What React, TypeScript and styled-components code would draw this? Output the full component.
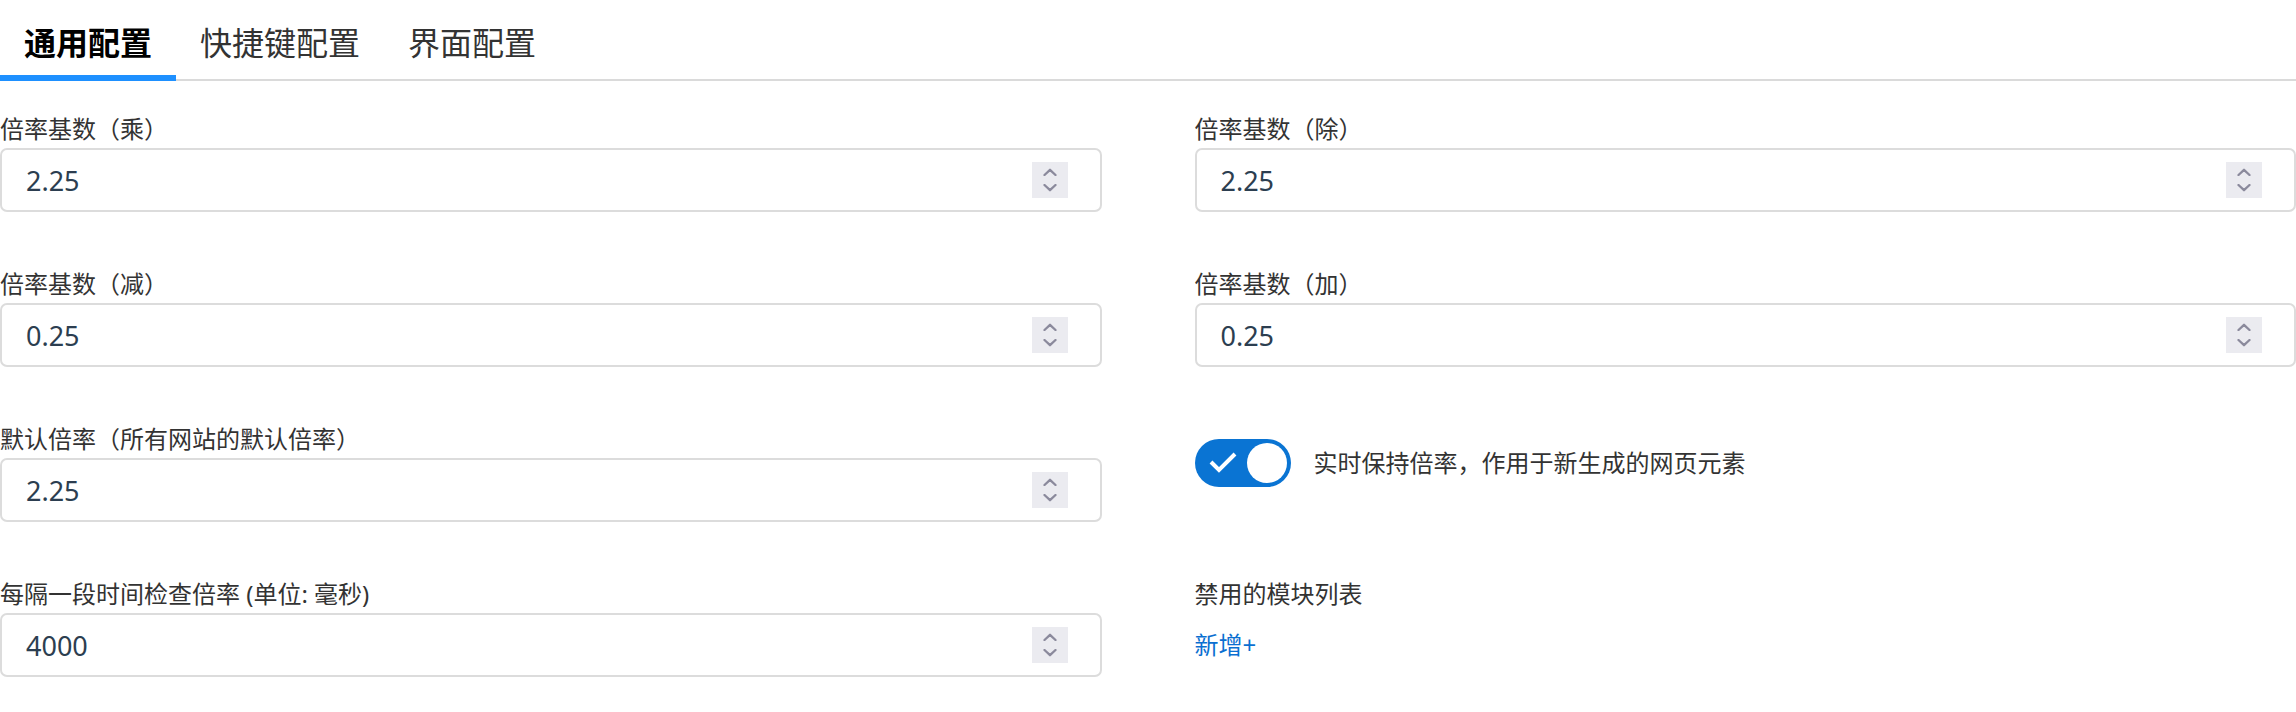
import React, { useState } from "react";
import styled, { createGlobalStyle } from "styled-components";

const GlobalStyle = createGlobalStyle`
  html, body { margin: 0; padding: 0; background: #ffffff; }
  body { font-family: "Noto Sans", "Noto Sans CJK SC", sans-serif; }
  * { box-sizing: border-box; }
`;

const Page = styled.div`
  width: 2296px;
`;

const TabBar = styled.div`
  display: flex;
  border-bottom: 2px solid #dadada;
`;

const Tab = styled.div<{ $active?: boolean }>`
  padding: 19px 24px 12px;
  line-height: 44px;
  font-size: 32px;
  font-family: "Noto Sans CJK SC", sans-serif;
  font-weight: ${(p) => (p.$active ? 700 : 400)};
  color: ${(p) => (p.$active ? "#000000" : "#333333")};
  border-bottom: 6px solid ${(p) => (p.$active ? "#1e90ff" : "transparent")};
  margin-bottom: -2px;
  cursor: pointer;
`;

const Form = styled.div`
  display: grid;
  grid-template-columns: 1fr 1fr;
  column-gap: 93px;
  row-gap: 56px;
  padding-top: 32px;
`;

const Field = styled.div`
  display: flex;
  flex-direction: column;
`;

const Label = styled.div`
  font-size: 24px;
  line-height: 32px;
  color: #333333;
  margin-bottom: 3px;
  white-space: nowrap;
`;

const InputBox = styled.div`
  display: flex;
  align-items: center;
  height: 64px;
  border: 2px solid #dcdcdc;
  border-radius: 7px;
  padding: 0 32px 0 24px;
  background: #ffffff;
`;

const ValueInput = styled.input`
  flex: 1;
  min-width: 0;
  border: none;
  outline: none;
  background: transparent;
  padding: 0;
  font-family: "Noto Sans", sans-serif;
  font-size: 27px;
  color: #2c3e50;
`;

const Spinner = styled.div`
  width: 36px;
  height: 36px;
  background: #ebebf0;
  display: flex;
  flex-direction: column;
  align-items: center;
  justify-content: center;
  gap: 8px;
`;

const ToggleRow = styled.label`
  display: flex;
  align-items: center;
  gap: 23px;
  margin-top: 16px;
  font-size: 24px;
  line-height: 48px;
  color: #333333;
  cursor: pointer;
`;

const Track = styled.span<{ $on: boolean }>`
  width: 96px;
  height: 48px;
  border-radius: 24px;
  background: ${(p) => (p.$on ? "#0a74d3" : "#c8c8c8")};
  display: flex;
  align-items: center;
  justify-content: space-between;
  padding: 0 4px 0 14px;
  flex-shrink: 0;
`;

const Knob = styled.span`
  width: 40px;
  height: 40px;
  border-radius: 50%;
  background: #ffffff;
`;

const AddLink = styled.a`
  font-size: 24px;
  line-height: 64px;
  color: #0a6fd1;
  text-decoration: none;
  cursor: pointer;
  align-self: flex-start;
`;

const Chevron = ({ up }: { up?: boolean }) => (
  <svg width="14" height="8" viewBox="0 0 14 8">
    <path
      d={up ? "M1.5 7 L7 1.8 L12.5 7" : "M1.5 1 L7 6.2 L12.5 1"}
      fill="none"
      stroke="#8b8a9c"
      strokeWidth="2.3"
      strokeLinecap="round"
      strokeLinejoin="round"
    />
  </svg>
);

const NumberField = ({ label, value }: { label: string; value: string }) => {
  const [v, setV] = useState(value);
  return (
    <Field>
      <Label>{label}</Label>
      <InputBox>
        <ValueInput value={v} onChange={(e) => setV(e.target.value)} />
        <Spinner>
          <Chevron up />
          <Chevron />
        </Spinner>
      </InputBox>
    </Field>
  );
};

export default function App() {
  const [on, setOn] = useState(true);
  return (
    <Page>
      <GlobalStyle />
      <TabBar>
        <Tab $active>通用配置</Tab>
        <Tab>快捷键配置</Tab>
        <Tab>界面配置</Tab>
      </TabBar>
      <Form>
        <NumberField label="倍率基数（乘）" value="2.25" />
        <NumberField label="倍率基数（除）" value="2.25" />
        <NumberField label="倍率基数（减）" value="0.25" />
        <NumberField label="倍率基数（加）" value="0.25" />
        <NumberField label="默认倍率（所有网站的默认倍率）" value="2.25" />
        <Field>
          <ToggleRow onClick={() => setOn(!on)}>
            <Track $on={on}>
              <svg width="28" height="22" viewBox="0 0 28 22">
                <path
                  d="M2 10 L10 18 L26 2"
                  fill="none"
                  stroke="#ffffff"
                  strokeWidth="4"
                />
              </svg>
              <Knob />
            </Track>
            实时保持倍率，作用于新生成的网页元素
          </ToggleRow>
        </Field>
        <NumberField label="每隔一段时间检查倍率 (单位: 毫秒)" value="4000" />
        <Field>
          <Label>禁用的模块列表</Label>
          <AddLink>新增+</AddLink>
        </Field>
      </Form>
    </Page>
  );
}
